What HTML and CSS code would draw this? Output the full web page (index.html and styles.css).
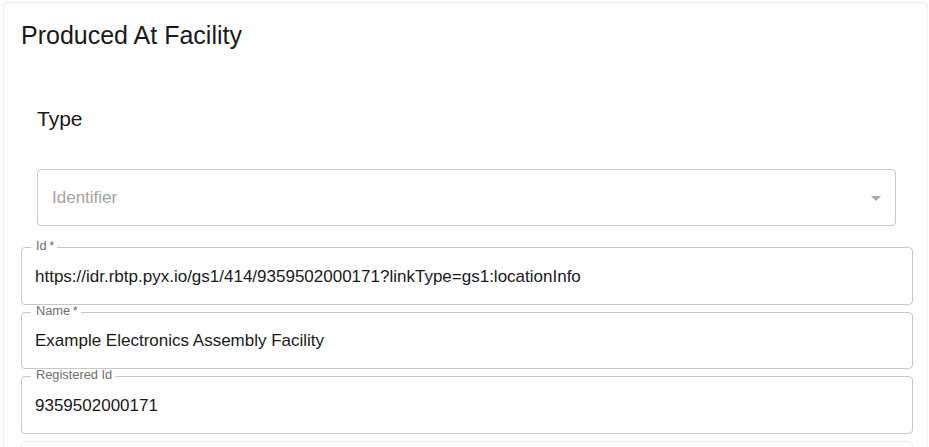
FILE: index.html
```html
<!DOCTYPE html>
<html lang="en">
<head>
<meta charset="utf-8">
<title>Produced At Facility</title>
<link rel="stylesheet" href="styles.css">
</head>
<body>
<div class="card">
  <h2 class="card-title">Produced At Facility</h2>
  <div class="section">
    <h3 class="section-title">Type</h3>
    <div class="select">
      <span class="select-placeholder">Identifier</span>
      <svg class="select-arrow" viewBox="0 0 24 24" width="24" height="24" aria-hidden="true"><path d="M7 10l5 5 5-5z"/></svg>
    </div>
  </div>
  <div class="fields">
    <div class="field">
      <span class="field-label">Id&thinsp;*</span>
      <span class="field-value">https://idr.rbtp.pyx.io/gs1/414/9359502000171?linkType=gs1:locationInfo</span>
    </div>
    <div class="field">
      <span class="field-label">Name&thinsp;*</span>
      <span class="field-value">Example Electronics Assembly Facility</span>
    </div>
    <div class="field">
      <span class="field-label">Registered Id</span>
      <span class="field-value">9359502000171</span>
    </div>
    <div class="field field-faint"></div>
  </div>
</div>
</body>
</html>
```

FILE: styles.css
```css
html, body {
  margin: 0;
  padding: 0;
  background: #ffffff;
  overflow: hidden;
}

body {
  font-family: "Liberation Sans", Arial, sans-serif;
  color: rgba(0, 0, 0, 0.87);
  height: 447px;
}

.card {
  margin: 2px 1px 0 3px;
  border: 1px solid #efefef;
  border-radius: 4px;
  padding: 16px 14px 40px 17px;
  background: #fff;
}

.card-title {
  margin: 0;
  font-size: 25px;
  line-height: 32px;
  font-weight: 400;
  color: #1a1a1a;
}

.section {
  padding: 0 17px 0 16px;
}

.section-title {
  margin: 54px 0 0 0;
  font-size: 21px;
  line-height: 28px;
  font-weight: 400;
  color: #1a1a1a;
}

.select {
  margin-top: 36px;
  height: 57px;
  box-sizing: border-box;
  border: 1px solid #c8c8c8;
  border-radius: 4px;
  display: flex;
  align-items: center;
  justify-content: space-between;
  padding: 0 7px 0 14px;
}

.select-placeholder {
  font-size: 17px;
  color: #a3a3a3;
}

.select-arrow {
  fill: #a8a8a8;
  display: block;
}

.fields {
  margin-top: 21px;
  display: flex;
  flex-direction: column;
  gap: 7px;
}

.field {
  position: relative;
  height: 57.5px;
  box-sizing: border-box;
  border: 1px solid #c8c8c8;
  border-radius: 4px;
  display: flex;
  align-items: center;
  padding: 2px 13px 0 13px;
}

.field-label {
  position: absolute;
  top: -8px;
  left: 9px;
  padding: 0 3px 0 5px;
  background: #fff;
  font-size: 12.8px;
  line-height: 12px;
  color: #707070;
}

.field-value {
  font-size: 17px;
  color: #1a1a1a;
  white-space: nowrap;
}

.field-faint {
  border-color: #eeeeee;
}
```
